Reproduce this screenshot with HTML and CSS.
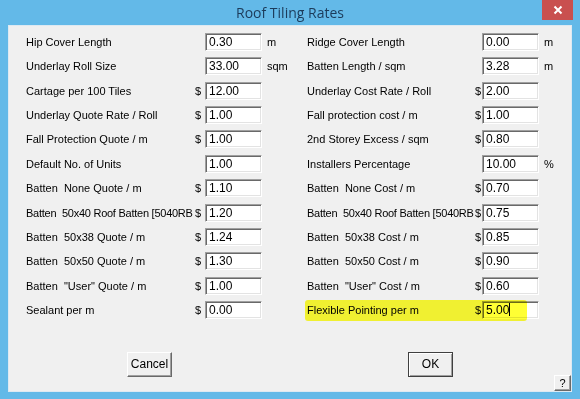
FILE: index.html
```html
<!DOCTYPE html>
<html>
<head>
	<title>Roof Tiling Rates</title>
	<link rel="stylesheet" href="styles.css">
</head>
<body>
	<div class="window">
		<div class="titlebar">
			<span class="title">Roof Tiling Rates</span>
			<div class="close">
				<svg width="10" height="10" viewBox="0 0 10 10"><path d="M1.5 1.5 L8.5 8.5 M8.5 1.5 L1.5 8.5" stroke="#fff" stroke-width="2"/></svg>
			</div>
		</div>
		<div class="client">
			<div class="fields">
				<div class="col col-left">
					<span class="label">Hip Cover Length</span><span class="cur"></span><span class="box">0.30</span><span class="unit">m</span>
					<span class="label">Underlay Roll Size</span><span class="cur"></span><span class="box">33.00</span><span class="unit">sqm</span>
					<span class="label">Cartage per 100 Tiles</span><span class="cur">$</span><span class="box">12.00</span><span class="unit"></span>
					<span class="label">Underlay Quote Rate / Roll</span><span class="cur">$</span><span class="box">1.00</span><span class="unit"></span>
					<span class="label">Fall Protection Quote / m</span><span class="cur">$</span><span class="box">1.00</span><span class="unit"></span>
					<span class="label">Default No. of Units</span><span class="cur"></span><span class="box">1.00</span><span class="unit"></span>
					<span class="label">Batten  None Quote / m</span><span class="cur">$</span><span class="box">1.10</span><span class="unit"></span>
					<span class="label long">Batten  50x40 Roof Batten [5040RB</span><span class="cur">$</span><span class="box">1.20</span><span class="unit"></span>
					<span class="label">Batten  50x38 Quote / m</span><span class="cur">$</span><span class="box">1.24</span><span class="unit"></span>
					<span class="label">Batten  50x50 Quote / m</span><span class="cur">$</span><span class="box">1.30</span><span class="unit"></span>
					<span class="label">Batten  &quot;User&quot; Quote / m</span><span class="cur">$</span><span class="box">1.00</span><span class="unit"></span>
					<span class="label">Sealant per m</span><span class="cur">$</span><span class="box">0.00</span><span class="unit"></span>
				</div>
				<div class="col col-right">
					<span class="label">Ridge Cover Length</span><span class="cur"></span><span class="box">0.00</span><span class="unit">m</span>
					<span class="label">Batten Length / sqm</span><span class="cur"></span><span class="box">3.28</span><span class="unit">m</span>
					<span class="label">Underlay Cost Rate / Roll</span><span class="cur">$</span><span class="box">2.00</span><span class="unit"></span>
					<span class="label">Fall protection cost / m</span><span class="cur">$</span><span class="box">1.00</span><span class="unit"></span>
					<span class="label">2nd Storey Excess / sqm</span><span class="cur">$</span><span class="box">0.80</span><span class="unit"></span>
					<span class="label">Installers Percentage</span><span class="cur"></span><span class="box">10.00</span><span class="unit">%</span>
					<span class="label">Batten  None Cost / m</span><span class="cur">$</span><span class="box">0.70</span><span class="unit"></span>
					<span class="label long">Batten  50x40 Roof Batten [5040RB</span><span class="cur">$</span><span class="box">0.75</span><span class="unit"></span>
					<span class="label">Batten  50x38 Cost / m</span><span class="cur">$</span><span class="box">0.85</span><span class="unit"></span>
					<span class="label">Batten  50x50 Cost / m</span><span class="cur">$</span><span class="box">0.90</span><span class="unit"></span>
					<span class="label">Batten  &quot;User&quot; Cost / m</span><span class="cur">$</span><span class="box">0.60</span><span class="unit"></span>
					<span class="label">Flexible Pointing per m</span><span class="cur">$</span><span class="box">5.00<span class="caret"></span></span><span class="unit"></span>
					<span class="mark"></span>
				</div>
			</div>
			<div class="buttons">
				<button class="btn btn-cancel">Cancel</button>
				<button class="btn btn-ok">OK</button>
				<button class="btn btn-help">?</button>
			</div>
		</div>
	</div>
</body>
</html>
```

FILE: styles.css
```css
body {
	margin: 0;
	font-family: "Liberation Sans", Arial, sans-serif;
}

.window {
	width: 580px;
	height: 399px;
	background-color: #63b9e8;
	display: flex;
	flex-direction: column;
}

.titlebar {
	height: 25px;
	display: flex;
	align-items: center;
	justify-content: center;
	position: relative;
}

.title {
	font-family: "Open Sans", sans-serif;
	font-size: 14px;
	color: #1c3b5a;
}

.close {
	position: absolute;
	right: 7px;
	top: 0;
	width: 31px;
	height: 20px;
	background-color: #c9504f;
	display: flex;
	align-items: center;
	justify-content: center;
}

.client {
	flex: 1;
	margin: 0 8px 7px;
	background-color: #f0f0f0;
	border: 1px solid #dde9f2;
	padding: 7px 0 0 17px;
	display: flex;
	flex-direction: column;
}

.fields {
	display: flex;
}

.col {
	display: grid;
	grid-auto-rows: 18px;
	row-gap: 6.36px;
	align-items: center;
	font-size: 11px;
	color: #000;
}

.col-left {
	grid-template-columns: 169px 10px 57px 45px;
}

.col-right {
	grid-template-columns: 168px 7px 57px 30px;
	position: relative;
}

.label {
	white-space: pre;
	overflow: hidden;
}

.long {
	letter-spacing: -0.25px;
}

.box {
	height: 18px;
	box-sizing: border-box;
	background-color: #fff;
	border: 1px solid;
	border-color: #a0a0a0 #fff #fff #a0a0a0;
	box-shadow: inset 1px 1px 0 #696969, inset -1px -1px 0 #e3e3e3;
	font-size: 12px;
	line-height: 16px;
	padding-left: 3px;
}

.caret {
	display: inline-block;
	width: 1px;
	height: 13px;
	background-color: #000;
	vertical-align: -2px;
}

.unit {
	padding-left: 5px;
}

.mark {
	position: absolute;
	left: -2px;
	top: 267px;
	width: 222px;
	height: 21px;
	background-color: #ffff34;
	mix-blend-mode: multiply;
	border-radius: 3px;
}

.buttons {
	flex: 1;
	display: flex;
	align-items: flex-start;
	margin-top: 33px;
	padding-left: 101px;
}

.btn {
	font-family: "Liberation Sans", Arial, sans-serif;
	font-size: 12px;
	color: #000;
	background-color: #f0f0f0;
	border: 1px solid;
	border-color: #fff #696969 #696969 #fff;
	box-shadow: inset -1px -1px 0 #a0a0a0;
	padding: 0;
	height: 25px;
}

.btn-cancel {
	width: 45px;
}

.btn-ok {
	width: 45px;
	margin-left: 236px;
	border: 1px solid #404040;
	box-shadow: inset 1px 1px 0 #fff, inset -1px -1px 0 #a0a0a0;
}

.btn-help {
	width: 17px;
	height: 16px;
	font-size: 11px;
	margin-left: auto;
	align-self: flex-end;
}
```
